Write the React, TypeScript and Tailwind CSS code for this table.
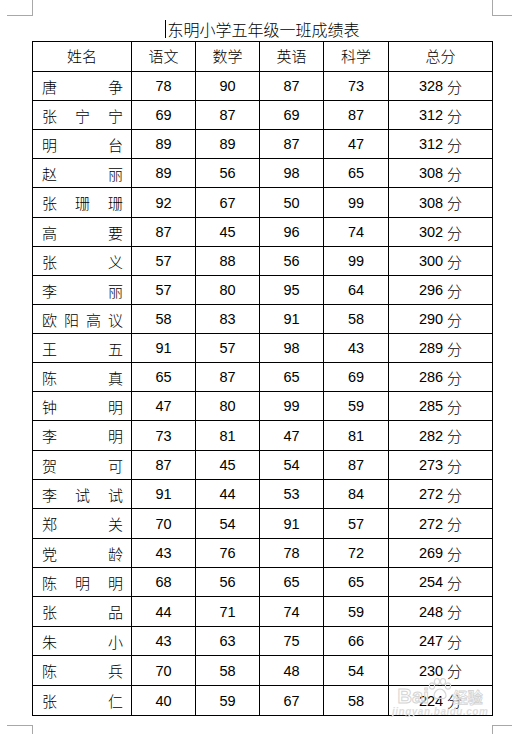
import React from "react";

type Row = { name: string[]; s: number[]; total: number; h: string };

const rows: Row[] = [
  { name: ["唐", "争"], s: [78, 90, 87, 73], total: 328, h: "h-[29px]" },
  { name: ["张", "宁", "宁"], s: [69, 87, 69, 87], total: 312, h: "h-[29px]" },
  { name: ["明", "台"], s: [89, 89, 87, 47], total: 312, h: "h-[29px]" },
  { name: ["赵", "丽"], s: [89, 56, 98, 65], total: 308, h: "h-[29px]" },
  { name: ["张", "珊", "珊"], s: [92, 67, 50, 99], total: 308, h: "h-[30px]" },
  { name: ["高", "要"], s: [87, 45, 96, 74], total: 302, h: "h-[29px]" },
  { name: ["张", "义"], s: [57, 88, 56, 99], total: 300, h: "h-[29px]" },
  { name: ["李", "丽"], s: [57, 80, 95, 64], total: 296, h: "h-[29px]" },
  { name: ["欧", "阳", "高", "议"], s: [58, 83, 91, 58], total: 290, h: "h-[29px]" },
  { name: ["王", "五"], s: [91, 57, 98, 43], total: 289, h: "h-[29px]" },
  { name: ["陈", "真"], s: [65, 87, 65, 69], total: 286, h: "h-[29px]" },
  { name: ["钟", "明"], s: [47, 80, 99, 59], total: 285, h: "h-[29px]" },
  { name: ["李", "明"], s: [73, 81, 47, 81], total: 282, h: "h-[30px]" },
  { name: ["贺", "可"], s: [87, 45, 54, 87], total: 273, h: "h-[29px]" },
  { name: ["李", "试", "试"], s: [91, 44, 53, 84], total: 272, h: "h-[29px]" },
  { name: ["郑", "关"], s: [70, 54, 91, 57], total: 272, h: "h-[30px]" },
  { name: ["党", "龄"], s: [43, 76, 78, 72], total: 269, h: "h-[29px]" },
  { name: ["陈", "明", "明"], s: [68, 56, 65, 65], total: 254, h: "h-[29px]" },
  { name: ["张", "品"], s: [44, 71, 74, 59], total: 248, h: "h-[30px]" },
  { name: ["朱", "小"], s: [43, 63, 75, 66], total: 247, h: "h-[29px]" },
  { name: ["陈", "兵"], s: [70, 58, 48, 54], total: 230, h: "h-[30px]" },
  { name: ["张", "仁"], s: [40, 59, 67, 58], total: 224, h: "h-[30px]" },
];

const scoreW = ["w-[64px]", "w-[64px]", "w-[64px]", "w-[65px]"];

const cjk = "font-['Noto_Sans_CJK_SC','Noto_Sans_CJK_JP',sans-serif]";
const num = "font-['Liberation_Sans','Noto_Sans_CJK_SC',sans-serif]";

function Paw() {
  return (
    <svg width="26" height="22" viewBox="0 0 26 22" fill="none" stroke="#d6d6d6" strokeWidth="1.2">
      <ellipse cx="5" cy="8" rx="2.6" ry="3.2" />
      <ellipse cx="10" cy="3.6" rx="2.6" ry="3.1" />
      <ellipse cx="16" cy="3.6" rx="2.6" ry="3.1" />
      <ellipse cx="21" cy="8" rx="2.6" ry="3.2" />
      <path d="M7 18c0-4 3-7 6-7s6 3 6 7c0 2.5-2.5 3-6 2.2C9.5 21 7 20.5 7 18z" />
    </svg>
  );
}

export default function App() {
  return (
    <div className="relative w-[512px] h-[734px] bg-white overflow-hidden">
      {/* page corner marks */}
      <div className="absolute left-[7px] top-0 w-[26px] h-[16px] border-r border-b border-[#a8a8a8]" />
      <div className="absolute left-[492px] top-0 w-[20px] h-[16px] border-l border-b border-[#a8a8a8]" />
      <div className="absolute left-[7px] top-[725px] w-[26px] h-[9px] border-r border-t border-[#a8a8a8]" />
      <div className="absolute left-[492px] top-[725px] w-[20px] h-[9px] border-l border-t border-[#a8a8a8]" />

      <div className="flex flex-col pt-[19px] pl-[32px]">
        {/* title */}
        <div className="w-[461px] h-[20px] flex justify-center items-center">
          <div className={`flex items-center ${cjk} text-[16px] leading-[20px] text-black font-light`}>
            <span className="w-px h-[18px] bg-black mr-[1px]" />
            <span>东明小学五年级一班成绩表</span>
          </div>
        </div>

        {/* table */}
        <div className="mt-[2px] w-[461px] border-t border-l border-black flex flex-col text-black">
          <div className={`flex h-[30px] ${cjk} text-[15px] font-light`}>
            <div className="w-[99px] border-r border-b border-black flex items-center justify-center">姓名</div>
            <div className="w-[64px] border-r border-b border-black flex items-center justify-center">语文</div>
            <div className="w-[64px] border-r border-b border-black flex items-center justify-center">数学</div>
            <div className="w-[64px] border-r border-b border-black flex items-center justify-center">英语</div>
            <div className="w-[65px] border-r border-b border-black flex items-center justify-center">科学</div>
            <div className="w-[104px] border-r border-b border-black flex items-center justify-center">总分</div>
          </div>
          {rows.map((r, i) => (
            <div key={i} className={`flex ${r.h}`}>
              <div
                className={`w-[99px] border-r border-b border-black flex items-center justify-between pl-[9px] pr-[8px] pt-[2px] ${cjk} text-[15px] font-light`}
              >
                {r.name.map((c, j) => (
                  <span key={j}>{c}</span>
                ))}
              </div>
              {r.s.map((v, j) => (
                <div
                  key={j}
                  className={`${scoreW[j]} border-r border-b border-black flex items-center justify-center pt-[2px] ${num} text-[14.5px]`}
                >
                  {v}
                </div>
              ))}
              <div className={`w-[104px] border-r border-b border-black flex items-center justify-center pt-[2px] ${num} text-[14.5px]`}>
                <span>{r.total}</span>
                <span className={`ml-[4px] ${cjk} text-[15px] font-light`}>分</span>
              </div>
            </div>
          ))}
        </div>
      </div>

      {/* watermark */}
      <div className="absolute left-[392px] top-[678px] flex flex-col items-center pointer-events-none">
        <div className="flex items-end h-[28px]">
          <span className="font-['Liberation_Sans',sans-serif] font-bold text-[20px] leading-[20px] text-transparent [-webkit-text-stroke:1px_#d4d4d4]">
            Bai
          </span>
          <div className="-mt-[10px] -ml-[2px] mb-[6px]">
            <Paw />
          </div>
          <span className={`${cjk} font-bold text-[15px] leading-[18px] text-transparent [-webkit-text-stroke:0.8px_#d4d4d4]`}>
            经验
          </span>
        </div>
        <span className="font-['Liberation_Sans',sans-serif] font-bold italic text-[10px] leading-[12px] text-[#dedede] tracking-[0.5px]">
          jingyan.baidu.com
        </span>
      </div>
    </div>
  );
}
